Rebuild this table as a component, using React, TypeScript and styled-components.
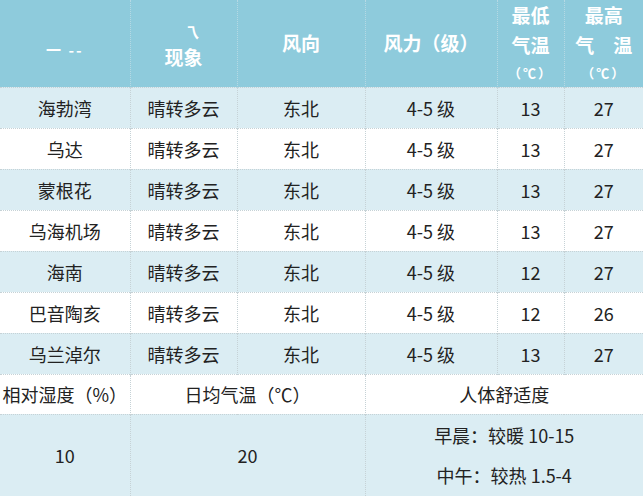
import React from "react";
import styled, { createGlobalStyle } from "styled-components";

const GlobalStyle = createGlobalStyle`
  html, body {
    margin: 0;
    padding: 0;
    background: #ffffff;
  }
  body {
    font-family: "Noto Sans CJK SC", "Noto Sans", sans-serif;
  }
`;

const Table = styled.table`
  width: 643px;
  border-collapse: collapse;
  table-layout: fixed;
  color: #222;
  font-size: 18px;
`;

const HeadRow = styled.tr`
  height: 87px;
  background: #8ecbdc;
`;

const Th = styled.th<{ $pad?: string }>`
  color: #ffffff;
  font-weight: 700;
  font-size: 19px;
  line-height: 30px;
  text-align: center;
  vertical-align: middle;
  padding: ${(p) => p.$pad || "0"};
  border-left: 1px dotted #b5d9e4;
  &:first-child {
    border-left: none;
  }
`;

const Small = styled.div`
  font-size: 13px;
  line-height: 26px;
  letter-spacing: 2px;
`;

const Faded = styled.div`
  font-size: 15px;
  line-height: 20px;
  letter-spacing: 2px;
`;

const Row = styled.tr<{ $alt?: boolean; $h?: number }>`
  height: ${(p) => p.$h || 41}px;
  background: ${(p) => (p.$alt ? "#dbedf3" : "#ffffff")};
`;

const Td = styled.td`
  text-align: center;
  vertical-align: middle;
  padding: 0;
  border-top: 1px dotted #c6d2d6;
  border-left: 1px dotted #c6d2d6;
  &:first-child {
    border-left: none;
  }
`;

const Lines = styled.div`
  display: flex;
  flex-direction: column;
  gap: 13px;
  line-height: 27px;
`;

const rows = [
  ["海勃湾", "13", "27"],
  ["乌达", "13", "27"],
  ["蒙根花", "13", "27"],
  ["乌海机场", "13", "27"],
  ["海南", "12", "27"],
  ["巴音陶亥", "12", "26"],
  ["乌兰淖尔", "13", "27"],
];

export default function App() {
  return (
    <>
      <GlobalStyle />
      <Table>
        <colgroup>
          <col style={{ width: 130 }} />
          <col style={{ width: 107 }} />
          <col style={{ width: 128 }} />
          <col style={{ width: 132 }} />
          <col style={{ width: 67 }} />
          <col style={{ width: 79 }} />
        </colgroup>
        <thead>
          <HeadRow>
            <Th $pad="14px 0 0 0">
              <Faded>一 --</Faded>
            </Th>
            <Th $pad="8px 0 0 0">
              <Faded style={{ paddingLeft: 18 }}>乁</Faded>
              <div>现象</div>
            </Th>
            <Th>风向</Th>
            <Th>风力（级）</Th>
            <Th>
              <div>最低</div>
              <div>气温</div>
              <Small>（℃）</Small>
            </Th>
            <Th>
              <div>最高</div>
              <div>气　温</div>
              <Small>（℃）</Small>
            </Th>
          </HeadRow>
        </thead>
        <tbody>
          {rows.map(([name, lo, hi], i) => (
            <Row key={name} $alt={i % 2 === 0}>
              <Td>{name}</Td>
              <Td>晴转多云</Td>
              <Td>东北</Td>
              <Td>4-5 级</Td>
              <Td>{lo}</Td>
              <Td>{hi}</Td>
            </Row>
          ))}
          <Row $h={40}>
            <Td>相对湿度（%）</Td>
            <Td colSpan={2}>日均气温（℃）</Td>
            <Td colSpan={3}>人体舒适度</Td>
          </Row>
          <Row $alt $h={82}>
            <Td>10</Td>
            <Td colSpan={2}>20</Td>
            <Td colSpan={3}>
              <Lines>
                <div>早晨：较暖 10-15</div>
                <div>中午：较热 1.5-4</div>
              </Lines>
            </Td>
          </Row>
        </tbody>
      </Table>
    </>
  );
}
